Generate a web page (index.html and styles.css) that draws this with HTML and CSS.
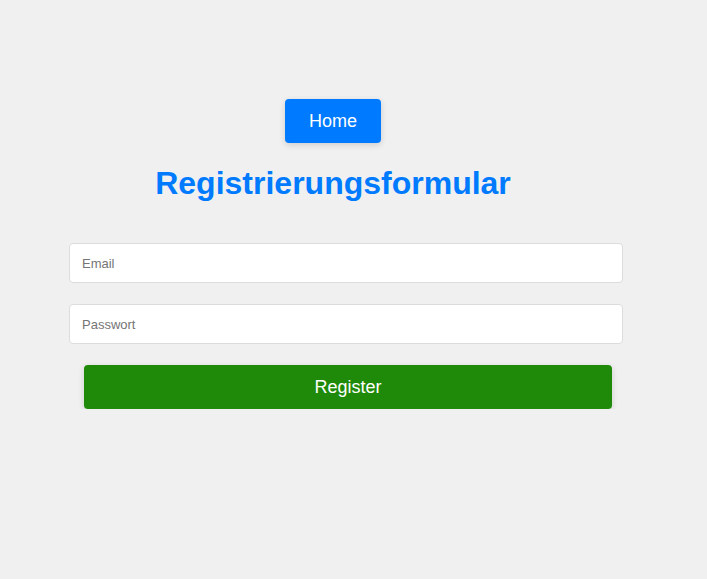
FILE: index.html
```html
<!DOCTYPE html>
<html lang="de">
<head>
<meta charset="utf-8">
<title>Registrierungsformular</title>
<link rel="stylesheet" href="styles.css">
</head>
<body>
<div class="container">
  <div class="nav">
    <a class="home-btn" href="#">Home</a>
  </div>
  <h1 class="title">Registrierungsformular</h1>
  <form class="form">
    <input class="field" type="email" placeholder="Email">
    <input class="field" type="password" placeholder="Passwort">
    <button class="register-btn" type="button">Register</button>
  </form>
</div>
</body>
</html>
```
FILE: styles.css
```css
html, body {
  margin: 0;
  padding: 0;
  background: #f0f0f0;
  font-family: "Liberation Sans", Arial, sans-serif;
}
.container {
  width: 528px;
  margin-left: 69px;
  padding-top: 99px;
}
.nav {
  display: flex;
  justify-content: center;
}
.home-btn {
  display: block;
  box-sizing: border-box;
  width: 96px;
  height: 44px;
  line-height: 44px;
  text-align: center;
  background: #007bff;
  color: #fff;
  font-size: 18px;
  text-decoration: none;
  border-radius: 4px;
  box-shadow: 0 2px 6px rgba(0, 0, 0, 0.15);
}
.title {
  margin: 22px 0 0;
  height: 36px;
  line-height: 36px;
  text-align: center;
  color: #007bff;
  font-size: 32px;
  font-weight: bold;
}
.form {
  margin-top: 42px;
  display: flex;
  flex-direction: column;
  gap: 21px;
}
.field {
  box-sizing: border-box;
  width: 554px;
  height: 40px;
  padding: 0 12px;
  border: 1px solid #dcdcdc;
  border-radius: 4px;
  background: #fff;
  font-family: "Liberation Sans", Arial, sans-serif;
  font-size: 13px;
  color: #333;
  outline: none;
}
.field::placeholder {
  color: #757575;
}
.register-btn {
  box-sizing: border-box;
  width: 528px;
  height: 44px;
  margin-left: 15px;
  border: none;
  border-radius: 4px;
  background: #1f8a0a;
  color: #fff;
  font-family: "Liberation Sans", Arial, sans-serif;
  font-size: 18px;
  box-shadow: 0 2px 6px rgba(0, 0, 0, 0.15);
  cursor: pointer;
}
```
